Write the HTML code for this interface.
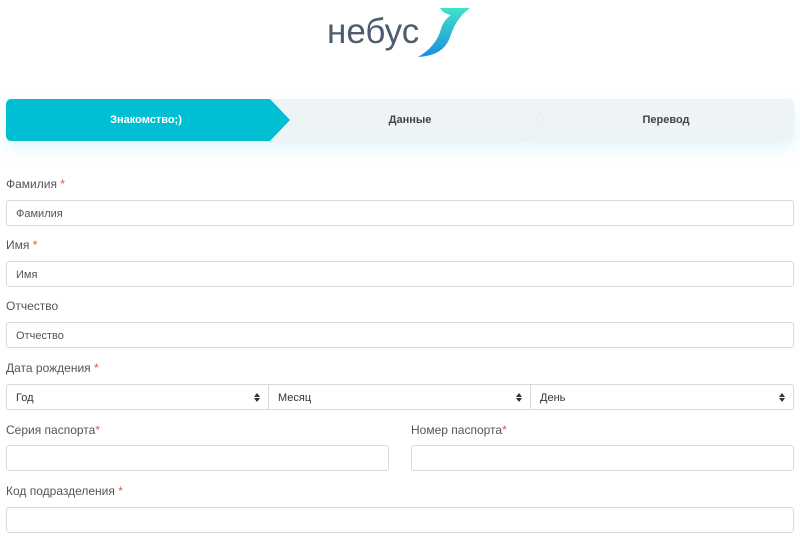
<!DOCTYPE html>
<html><head><meta charset="utf-8"><style>
*{box-sizing:border-box;margin:0;padding:0}
body{width:800px;height:548px;overflow:hidden;background:#fff;font-family:"Liberation Sans","DejaVu Sans",sans-serif;color:#555;position:relative}
.abs{position:absolute}
.logo{left:327px;top:12px;font-size:35px;color:#4d5d6e;font-family:"Liberation Sans",sans-serif;line-height:40px}
.steps{left:6px;top:99px;width:788px;height:42px;background:#eef4f6;border-radius:6px;box-shadow:0 8px 16px rgba(0,190,220,0.12)}
.st{position:absolute;top:0;height:42px;line-height:42px;font-size:11px;font-weight:bold;text-align:center}
label{position:absolute;left:6px;font-size:12px;color:#555}
label b{color:#e8553e;font-weight:normal}
.in{position:absolute;height:26px;border:1px solid #d6dadd;border-radius:3px;font-size:11px;color:#555;padding-left:9px;line-height:26px;background:#fff}
.sel{position:absolute;top:384px;height:26px;border:1px solid #d6dadd;font-size:11px;line-height:26px;padding-left:9px;color:#333}
.sel svg{position:absolute;right:8px;top:8px}
</style></head><body>
<div class="abs logo">небус</div>
<svg class="abs" style="left:418px;top:7px" width="54" height="50" viewBox="0 0 54 50">
<defs><linearGradient id="g" x1="0" y1="0" x2="0" y2="1"><stop offset="0" stop-color="#3fe3c8"/><stop offset="1" stop-color="#1a8fe0"/></linearGradient></defs>
<path d="M22 1 L52 1 C42 8 36 18 32 30 C28 42 18 49 0 50 C14 42 20 32 23 22 C25 15 29 11 33 8 C28 7 24 5 22 1Z" fill="url(#g)"/>
</svg>
<div class="abs steps">
<svg class="abs" style="left:0;top:0" width="788" height="42"><path d="M6 0 H264 L284 21 L264 42 H6 Q0 42 0 36 V6 Q0 0 6 0Z" fill="#00bfd3"/><path d="M520 0 L540 21 L520 42" fill="none" stroke="#e4ecef" stroke-width="1"/></svg>
<div class="st" style="left:0;width:280px;color:#fff">Знакомство;)</div>
<div class="st" style="left:284px;width:240px;color:#444">Данные</div>
<div class="st" style="left:540px;width:240px;color:#444">Перевод</div>
</div>
<label style="top:177px">Фамилия <b>*</b></label>
<div class="in" style="left:6px;top:200px;width:788px">Фамилия</div>
<label style="top:238px">Имя <b>*</b></label>
<div class="in" style="left:6px;top:261px;width:788px">Имя</div>
<label style="top:299px">Отчество</label>
<div class="in" style="left:6px;top:322px;width:788px">Отчество</div>
<label style="top:361px">Дата рождения <b>*</b></label>
<div class="sel" style="left:6px;width:263px;border-radius:3px 0 0 3px">Год<svg width="6" height="9"><path d="M0 4 L3 0 L6 4Z M0 5 L3 9 L6 5Z" fill="#333"/></svg></div>
<div class="sel" style="left:268px;width:263px">Месяц<svg width="6" height="9"><path d="M0 4 L3 0 L6 4Z M0 5 L3 9 L6 5Z" fill="#333"/></svg></div>
<div class="sel" style="left:530px;width:264px;border-radius:0 3px 3px 0">День<svg width="6" height="9"><path d="M0 4 L3 0 L6 4Z M0 5 L3 9 L6 5Z" fill="#333"/></svg></div>
<label style="top:423px">Серия паспорта<b>*</b></label>
<label style="top:423px;left:411px">Номер паспорта<b>*</b></label>
<div class="in" style="left:6px;top:445px;width:383px"></div>
<div class="in" style="left:411px;top:445px;width:383px"></div>
<label style="top:484px">Код подразделения <b>*</b></label>
<div class="in" style="left:6px;top:507px;width:788px"></div>
</body></html>
